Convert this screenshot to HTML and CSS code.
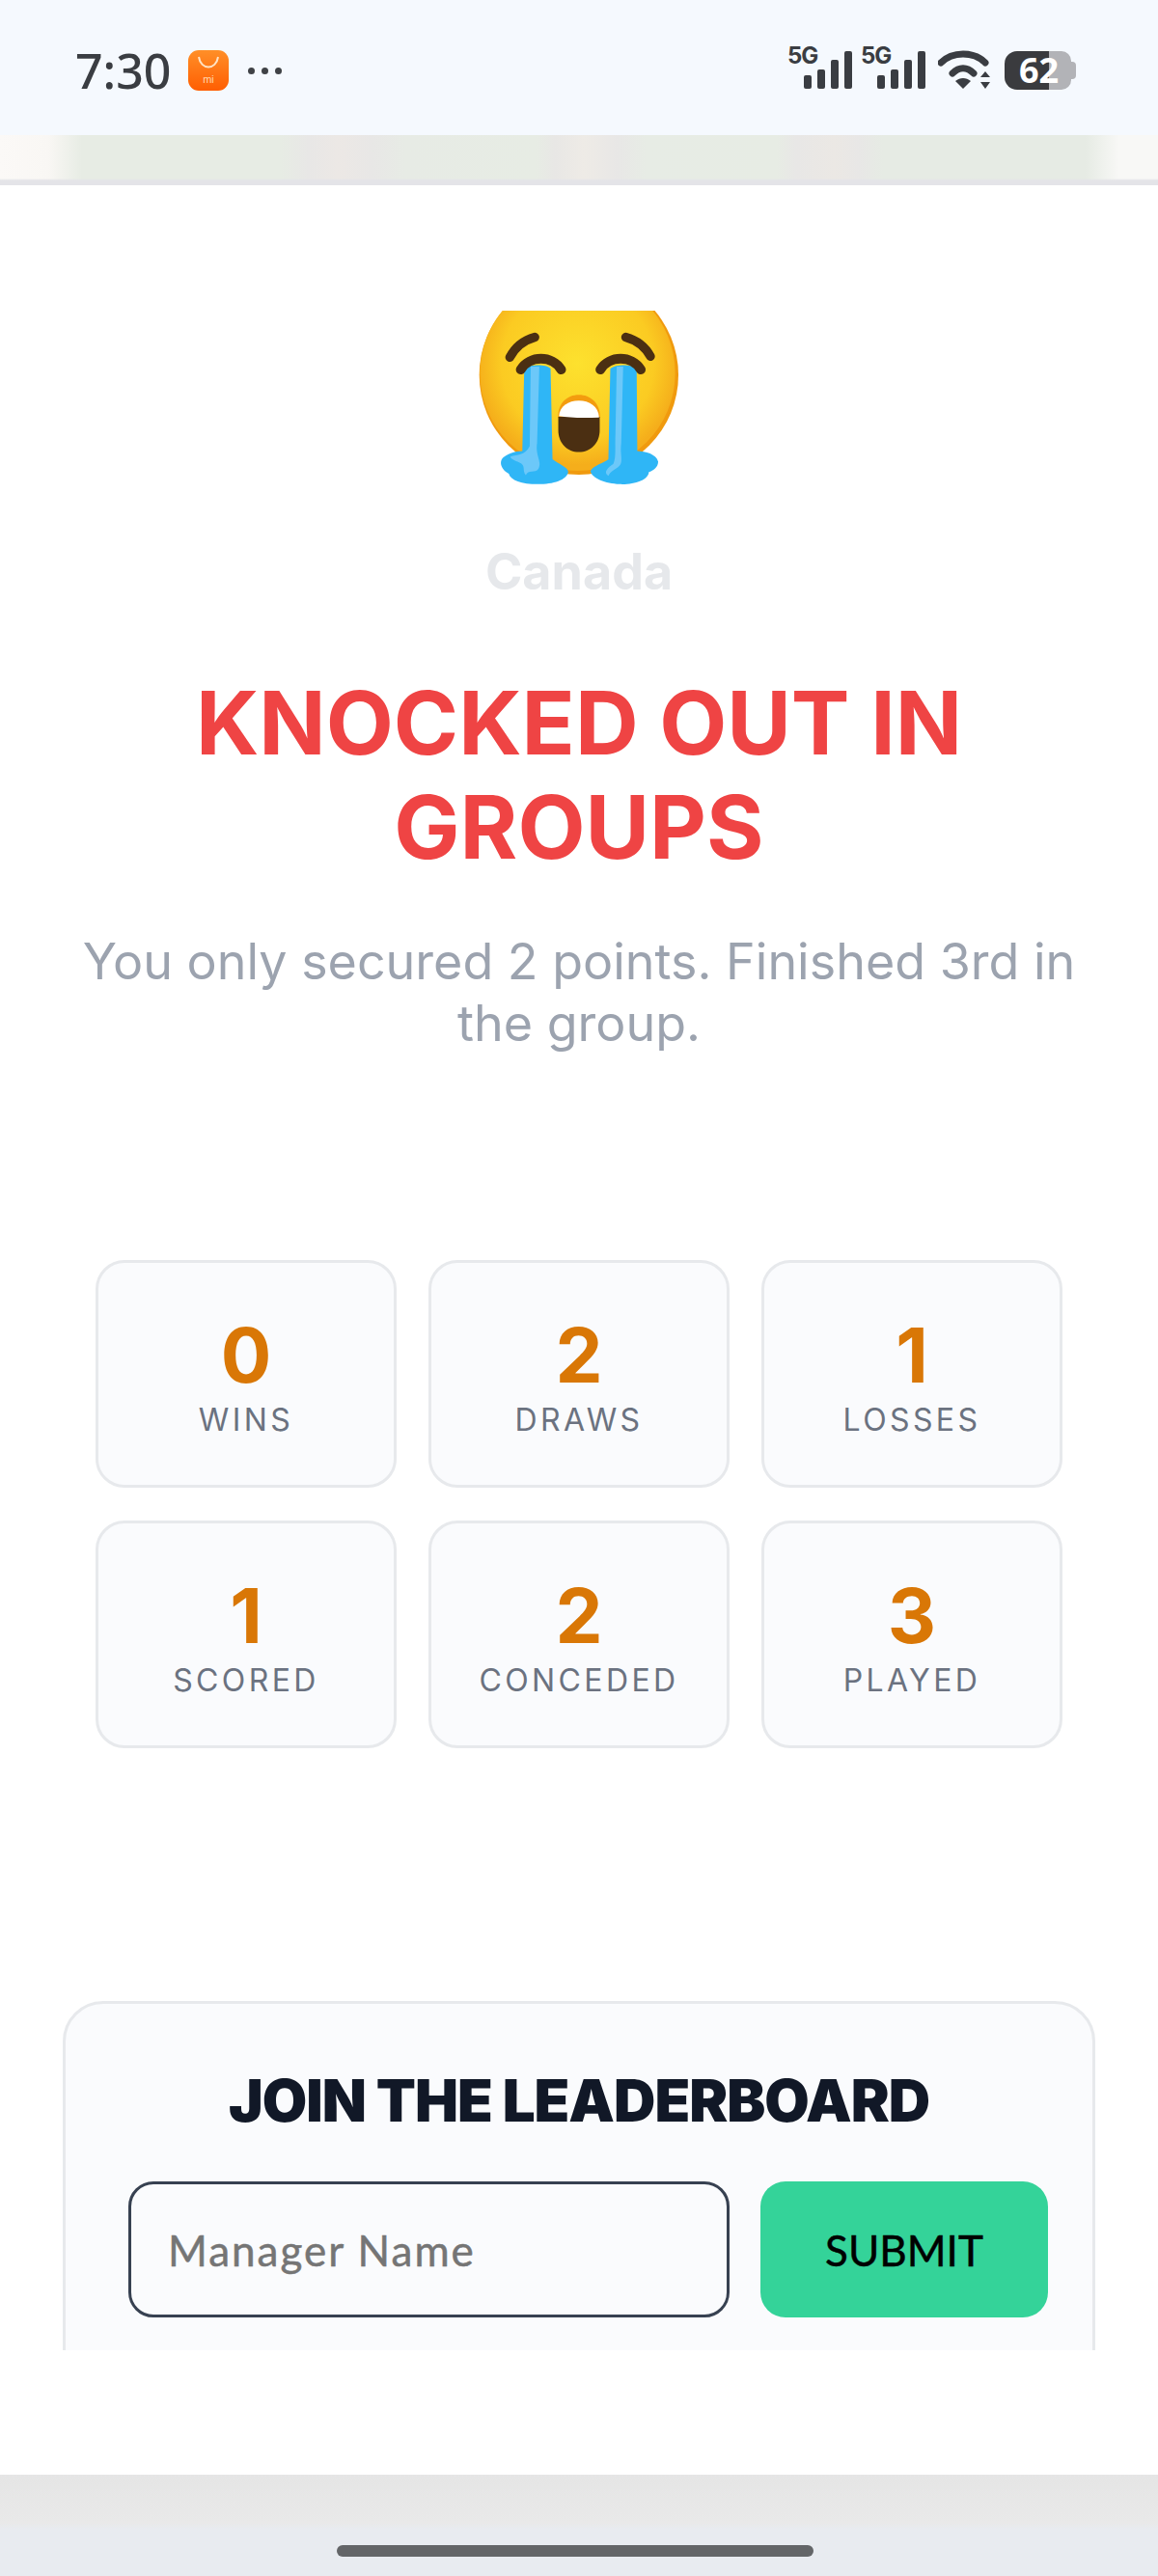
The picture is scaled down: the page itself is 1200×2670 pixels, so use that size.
FILE: index.html
```html
<!DOCTYPE html>
<html lang="en">
<head>
    <meta charset="UTF-8">
    <meta name="viewport" content="width=device-width, initial-scale=1.0">
    <title>Knocked out</title>
    <link rel="stylesheet" href="styles.css">
</head>
<body>

    <div class="status-bar">
        <div class="status-left">
            <span class="clock">7:30</span>
            <div class="app-icon">
                <svg width="42" height="42" viewBox="0 0 42 42">
                    <path d="M11 7 C13 21 29 21 31 7" fill="none" stroke="#ffe3c4" stroke-width="2"/>
                    <text x="21" y="34" class="mi-text">mi</text>
                </svg>
            </div>
            <div class="more-dots"><i></i><i></i><i></i></div>
        </div>
        <div class="status-right">
            <svg class="signal" width="70" height="60" viewBox="0 0 70 60">
                <text x="0" y="23" class="net-text">5G</text>
                <rect x="17" y="35" width="8" height="14" rx="2"/>
                <rect x="31" y="29" width="8" height="20" rx="2"/>
                <rect x="45" y="19" width="8" height="30" rx="2"/>
                <rect x="59" y="10" width="8" height="39" rx="2"/>
            </svg>
            <svg class="signal" width="70" height="60" viewBox="0 0 70 60">
                <text x="0" y="23" class="net-text">5G</text>
                <rect x="17" y="35" width="8" height="14" rx="2"/>
                <rect x="31" y="29" width="8" height="20" rx="2"/>
                <rect x="45" y="19" width="8" height="30" rx="2"/>
                <rect x="59" y="10" width="8" height="39" rx="2"/>
            </svg>
            <svg class="wifi" width="56" height="42" viewBox="0 0 56 42">
                <path d="M3 13 C15 1 37 1 49 13" fill="none" stroke="#3a3d42" stroke-width="7" stroke-linecap="round"/>
                <path d="M15 24 C22 17 30 17 37 24" fill="none" stroke="#3a3d42" stroke-width="7" stroke-linecap="round"/>
                <path d="M18 32 C23 28 29 28 34 32 L26 40 Z" fill="#3a3d42"/>
                <path d="M44 28 L49 22 L54 28 Z M44 33 L54 33 L49 40 Z" fill="#3a3d42"/>
            </svg>
            <div class="battery"><span>62</span></div>
        </div>
    </div>
    <div class="blur-strip"></div>

    <div class="result-page">
        <div class="emoji-box">
            <svg width="213" height="182" viewBox="130 98 640 546">
                <defs>
                    <radialGradient id="faceFill" cx="50%" cy="45%" r="52%">
                        <stop offset="0" stop-color="#fde12e"/>
                        <stop offset="0.75" stop-color="#fbcb22"/>
                        <stop offset="1" stop-color="#f5ae1b"/>
                    </radialGradient>
                </defs>
                <circle cx="448" cy="298" r="310" fill="#f09a0e"/>
                <circle cx="444" cy="292" r="304" fill="url(#faceFill)"/>
                <path d="M233 243 C250 210 275 190 311 180" fill="none" stroke="#4b2f12" stroke-width="28" stroke-linecap="round"/>
                <path d="M594 180 C630 190 655 210 671 240" fill="none" stroke="#4b2f12" stroke-width="28" stroke-linecap="round"/>
                <path d="M383 430 C383 385 412 360 448 360 C484 360 514 385 514 430 Z" fill="#f39c0f"/>
                <path d="M384 428 L513 428 L513 470 C513 510 484 538 448 538 C412 538 384 510 384 470 Z" fill="#4b2f12"/>
                <path d="M386 426 C388 396 415 378 448 378 C481 378 509 396 511 430 C470 432 420 432 386 426 Z" fill="#fff"/>
                <path d="M278 278 C300 264 345 264 360 278 L366 560 C385 575 415 585 415 600 C410 625 370 638 320 638 C270 638 235 625 230 605 C210 595 200 575 208 560 C220 545 250 535 272 535 Z" fill="#2fb6f6"/>
                <path d="M298 272 L325 272 L318 510 C312 550 335 570 322 590 C312 605 290 590 283 610 C270 595 285 580 262 570 C250 565 235 560 235 552 C255 545 280 550 295 520 Z" fill="#6cc8f9"/>
                <path d="M546 278 C565 264 610 264 628 278 L630 535 C655 535 690 545 695 568 C695 585 680 597 666 600 C665 625 620 640 575 638 C530 636 490 620 484 598 C490 580 530 570 540 560 Z" fill="#2fb6f6"/>
                <path d="M566 272 L586 272 L580 510 C575 550 590 570 570 585 C555 595 545 600 540 612 C522 600 540 585 555 575 C565 555 560 520 562 480 Z" fill="#6cc8f9"/>
                <path d="M267 281 C295 236 365 236 393 281" fill="none" stroke="#4b2f12" stroke-width="30" stroke-linecap="round"/>
                <path d="M515 281 C543 236 613 236 641 281" fill="none" stroke="#4b2f12" stroke-width="30" stroke-linecap="round"/>
            </svg>
        </div>
        <div class="country">Canada</div>
        <h1 class="result-title">KNOCKED OUT IN GROUPS</h1>
        <p class="result-text">You only secured 2 points. Finished 3rd in the group.</p>

        <div class="stats-grid">
            <div class="stat-card"><div class="stat-value">0</div><div class="stat-label">WINS</div></div>
            <div class="stat-card"><div class="stat-value">2</div><div class="stat-label">DRAWS</div></div>
            <div class="stat-card"><div class="stat-value">1</div><div class="stat-label">LOSSES</div></div>
            <div class="stat-card"><div class="stat-value">1</div><div class="stat-label">SCORED</div></div>
            <div class="stat-card"><div class="stat-value">2</div><div class="stat-label">CONCEDED</div></div>
            <div class="stat-card"><div class="stat-value">3</div><div class="stat-label">PLAYED</div></div>
        </div>

        <div class="join-clip">
            <form class="join-card">
                <h2 class="join-title">JOIN THE LEADERBOARD</h2>
                <div class="join-row">
                    <input class="join-input" type="text" placeholder="Manager Name">
                    <button class="join-button" type="button">SUBMIT</button>
                </div>
            </form>
        </div>
    </div>

    <div class="nav-area">
        <div class="home-bar"></div>
    </div>

</body>
</html>
```

FILE: styles.css
```css
* {
    box-sizing: border-box;
}

body {
    margin: 0;
    width: 1200px;
    height: 2670px;
    overflow: hidden;
    background: #fff;
    font-family: Inter, "Liberation Sans", sans-serif;
}

/* status bar */
.status-bar {
    height: 140px;
    background: #f5f9fe;
    display: flex;
    justify-content: space-between;
    align-items: center;
    padding: 6px 85px 0 78px;
}

.status-left {
    display: flex;
    align-items: center;
}

.clock {
    font-family: "Noto Sans", sans-serif;
    font-size: 50px;
    font-weight: 500;
    color: #3a3d42;
    line-height: 1;
}

.app-icon {
    width: 42px;
    height: 42px;
    margin-left: 18px;
    border-radius: 11px;
    background: linear-gradient(#ff8f28, #ff5e02);
}

.app-icon svg {
    display: block;
}

.mi-text {
    font-family: "Liberation Sans", sans-serif;
    font-size: 11px;
    fill: #ffd9b0;
    text-anchor: middle;
}

.more-dots {
    display: flex;
    gap: 7px;
    margin-left: 20px;
}

.more-dots i {
    width: 7px;
    height: 7px;
    border-radius: 50%;
    background: #3f4246;
}

.status-right {
    display: flex;
    align-items: center;
}

.signal {
    fill: #3a3d42;
    margin-right: 6px;
}

.net-text {
    font-family: Inter, sans-serif;
    font-size: 24px;
    font-weight: 700;
    letter-spacing: -1px;
}

.wifi {
    margin-left: 4px;
    margin-right: 13px;
}

.battery {
    position: relative;
    width: 69px;
    height: 40px;
    margin-right: 5px;
    border-radius: 13px 10px 10px 13px;
    background: linear-gradient(90deg, #3a3b3e 46px, #b2b3b7 46px);
    color: #fff;
    font-family: "Noto Sans", sans-serif;
    font-size: 36px;
    font-weight: 700;
    line-height: 40px;
    padding-left: 15px;
}

.battery::after {
    content: "";
    position: absolute;
    right: -5px;
    top: 11px;
    width: 5px;
    height: 18px;
    border-radius: 0 4px 4px 0;
    background: #b2b3b7;
}

.blur-strip {
    height: 52px;
    background:
        linear-gradient(transparent 45px, #e4e4e8 47px),
        linear-gradient(90deg, #fbf9f7 0, #f9f7f4 50px, #e7ece4 85px, #e7ece4 290px, #e8e7e6 320px, #ece8e5 350px, #e8e7e6 385px, #e7ebe5 420px, #e7ece4 555px, #e8e7e5 575px, #eeebe6 605px, #e8e7e6 640px, #e7ece5 670px, #e7ece4 805px, #e8e7e6 825px, #ebe8e4 865px, #e8e7e6 890px, #e6ebe4 915px, #e6ebe4 1125px, #f8f8f6 1160px);
}

/* result content */
.result-page {
    height: 2373px;
    background: #fff;
    padding-top: 130px;
    text-align: center;
}

.emoji-box {
    height: 182px;
}

.country {
    margin-top: 60px;
    font-size: 52px;
    font-weight: 700;
    line-height: 58px;
    color: #e6e8eb;
}

.result-title {
    width: 860px;
    margin: 73px auto 0;
    font-size: 91px;
    font-weight: 700;
    line-height: 108px;
    color: #ef4444;
}

.result-text {
    width: 1060px;
    margin: 54px auto 0;
    font-size: 52px;
    font-weight: 400;
    line-height: 64px;
    color: #9ca3af;
}

.stats-grid {
    display: grid;
    grid-template-columns: repeat(3, 312px);
    grid-auto-rows: 236px;
    gap: 34px 33px;
    padding-left: 99px;
    margin-top: 213px;
}

.stat-card {
    background: #fafbfd;
    border: 3px solid #e7e9ec;
    border-radius: 30px;
    padding-top: 53px;
}

.stat-value {
    font-size: 78px;
    font-weight: 700;
    line-height: 86px;
    color: #d97706;
}

.stat-label {
    margin-top: 4px;
    font-size: 32px;
    line-height: 40px;
    letter-spacing: 3.4px;
    color: #6b7280;
}

/* leaderboard form */
.join-clip {
    height: 362px;
    margin: 262px 65px 0;
    overflow: hidden;
}

.join-card {
    height: 480px;
    background: #fafbfd;
    border: 3px solid #e7e9ec;
    border-radius: 42px;
    padding: 65px 46px 0 65px;
}

.join-title {
    margin: 0 0 0 -19px;
    font-family: Inter, sans-serif;
    font-size: 60px;
    font-weight: 900;
    letter-spacing: -1px;
    line-height: 70px;
    color: #111827;
}

.join-row {
    display: flex;
    gap: 32px;
    margin-top: 49px;
}

.join-input {
    flex: 1;
    min-width: 0;
    height: 141px;
    background: #fafbfd;
    border: 3px solid #374151;
    border-radius: 26px;
    padding: 0 38px;
    font-family: Lato, sans-serif;
    font-size: 44px;
    letter-spacing: 2px;
    outline: none;
    -webkit-text-stroke: 0.5px;
}

.join-input::placeholder {
    color: #757575;
}

.join-button {
    flex: none;
    width: 298px;
    height: 141px;
    background: #34d399;
    color: #000;
    border: none;
    border-radius: 26px;
    font-family: Lato, sans-serif;
    font-size: 44px;
    -webkit-text-stroke: 0.5px;
}

/* bottom nav */
.nav-area {
    height: 105px;
    background: linear-gradient(#e5e5e5 0, #e9e9e9 50px, #e8ebf0 56px);
    padding-top: 73px;
}

.home-bar {
    width: 494px;
    height: 12px;
    margin-left: 349px;
    border-radius: 6px;
    background: #636568;
}
```
